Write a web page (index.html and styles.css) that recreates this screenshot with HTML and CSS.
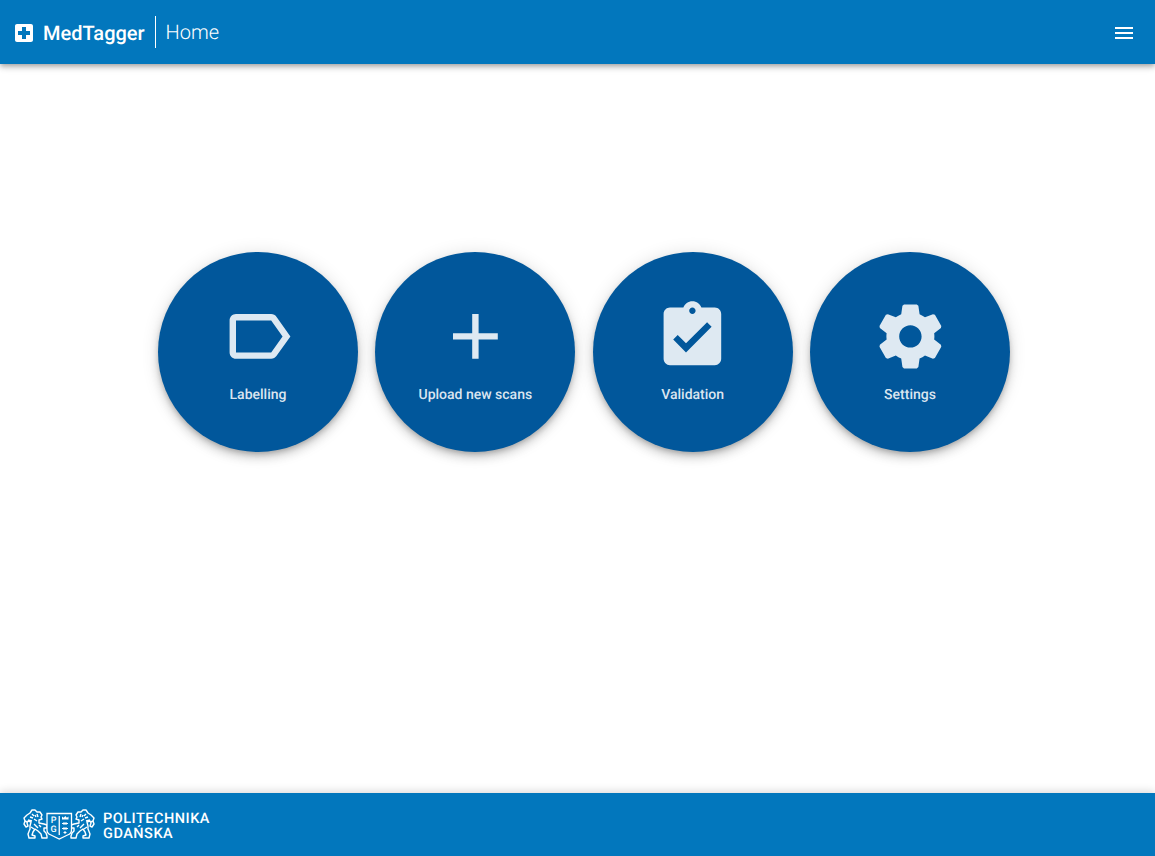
FILE: index.html
```html
<!DOCTYPE html>
<html lang="en">
<head>
  <meta charset="UTF-8">
  <meta name="viewport" content="width=device-width, initial-scale=1">
  <title>MedTagger</title>
  <link rel="stylesheet" href="styles.css">
</head>
<body>

<header class="toolbar">
  <svg class="toolbar-logo" viewBox="0 0 24 24"><path d="M19 3H5c-1.1 0-1.99.9-1.99 2L3 19c0 1.1.9 2 2 2h14c1.1 0 2-.9 2-2V5c0-1.1-.9-2-2-2zm-1 11h-4v4h-4v-4H6v-4h4V6h4v4h4v4z"/></svg>
  <span class="toolbar-brand">MedTagger</span>
  <span class="toolbar-page">Home</span>
  <svg class="toolbar-menu" viewBox="0 0 24 24"><path d="M3 18h18v-2H3v2zm0-5h18v-2H3v2zm0-7v2h18V6H3z"/></svg>
</header>

<main class="home">
  <a class="tile">
    <svg class="tile-icon" viewBox="0 0 24 24"><path d="M17.63 5.84C17.27 5.33 16.67 5 16 5L5 5.01C3.9 5.01 3 5.9 3 7v10c0 1.1.9 1.99 2 1.99L16 19c.67 0 1.27-.33 1.63-.84L22 12l-4.37-6.16zM16 17H5V7h11l3.55 5L16 17z"/></svg>
    <span class="tile-label">Labelling</span>
  </a>
  <a class="tile">
    <svg class="tile-icon" viewBox="0 0 24 24"><path d="M19 13h-6v6h-2v-6H5v-2h6V5h2v6h6v2z"/></svg>
    <span class="tile-label">Upload new scans</span>
  </a>
  <a class="tile">
    <svg class="tile-icon" viewBox="0 0 24 24"><path d="M19 3h-4.18C14.4 1.84 13.3 1 12 1c-1.3 0-2.4.84-2.82 2H5c-1.1 0-2 .9-2 2v14c0 1.1.9 2 2 2h14c1.1 0 2-.9 2-2V5c0-1.1-.9-2-2-2zm-7 0c.55 0 1 .45 1 1s-.45 1-1 1-1-.45-1-1 .45-1 1-1zm-2 14l-4-4 1.41-1.41L10 14.17l6.59-6.59L18 9l-8 8z"/></svg>
    <span class="tile-label">Validation</span>
  </a>
  <a class="tile">
    <svg class="tile-icon" viewBox="0 0 24 24"><path d="M19.43 12.98c.04-.32.07-.64.07-.98s-.03-.66-.07-.98l2.11-1.65.12-.64-2-3.46-.61-.22-2.49 1c-.52-.4-1.08-.73-1.69-.98l-.38-2.65L14 2h-4l-.49.42-.38 2.65c-.61.25-1.17.59-1.69.98l-2.49-1-.61.22-2 3.46.12.64 2.11 1.65c-.04.32-.07.65-.07.98s.03.66.07.98l-2.11 1.65-.12.64 2 3.46.61.22 2.49-1c.52.4 1.08.73 1.69.98l.38 2.65.49.42h4l.49-.42.38-2.65c.61-.25 1.17-.59 1.69-.98l2.49 1 .61-.22 2-3.46-.12-.64-2.11-1.65zM12 15.5c-1.93 0-3.5-1.57-3.5-3.5s1.57-3.500 3.500-3.500 3.500 1.570 3.500 3.500-1.570 3.500-3.500 3.500z"/></svg>
    <span class="tile-label">Settings</span>
  </a>
</main>

<footer class="footer">
  <svg class="crest" viewBox="0 0 72 32">
    <defs>
      <g id="lion" class="crest-lion">
        <path d="M12 1l2 2 3 0 2 3-1 2 1 2-3 1 0 3 5 1 3 1 0 3-3 0 0 3 2 2 1 3 0 2-5 0-1-4-3-3-3-2-2 3-1 3 3 1 0 2-6 0-1-4 2-5 0-3 1-4-3-1-1 2 1 3-2 1-2-3 1-3-1-3 3-3 3-2 2-3z"/>
        <path d="M9 5l2 2M7 8l3 1M5 11l4 1M14 5l1 3M11 10l3 2M12 6l1 2M11 15l4 4M8 18l3 2M16 16l2 2M2 12l2 1"/>
      </g>
    </defs>
    <use href="#lion"/>
    <use href="#lion" transform="matrix(-1 0 0 1 72 0)"/>
    <path class="crest-shield" d="M24 4.500h24.500v16.500c0 3-1 4-4 5l-8.250 4-8.250-4c-3-1-4-2-4-5z"/>
    <rect class="crest-bar" x="35.600" y="7" width="1.300" height="19"/>
    <text class="crest-letter" x="30.500" y="13.500">P</text>
    <text class="crest-letter" x="30.500" y="23">G</text>
    <path class="crest-bar" d="M39 10.500h6.500v-3l-1.600 1.200-1.600-1.700-1.600 1.700-1.700-1.200zM39 14h1.500v-1h1v1h1v-1h1v1h1.500v1h-1.500v1h-1v-1h-1v1h-1v-1h-1.500zM39 19h1.500v-1h1v1h1v-1h1v1h1.500v1h-1.500v1h-1v-1h-1v1h-1v-1h-1.500zM40.500 23h1v-1h1v1h1v1h-1v1h-1v-1h-1z"/>
  </svg>
  <div class="footer-name">POLITECHNIKA<br>GDAŃSKA</div>
</footer>

</body>
</html>
```

FILE: styles.css
```css
html, body {
  height: 100%;
}

body {
  margin: 0;
  display: flex;
  flex-direction: column;
  background: #ffffff;
  font-family: 'Roboto', sans-serif;
  text-rendering: geometricPrecision;
}

.toolbar {
  height: 64px;
  flex: none;
  display: flex;
  align-items: center;
  padding: 0 19px 0 12px;
  background: #0277bd;
  color: #ffffff;
  box-shadow: 0 2px 4px -1px rgba(0, 0, 0, 0.2), 0 4px 5px 0 rgba(0, 0, 0, 0.14), 0 1px 10px 0 rgba(0, 0, 0, 0.12);
  position: relative;
}

.toolbar-logo {
  width: 24px;
  height: 24px;
  fill: #ffffff;
  margin: 2px 7px 0 0;
}

.toolbar-brand {
  font-size: 20px;
  font-weight: 500;
  padding: 2px 10px 0 0;
  line-height: 30px;
  border-right: 1px solid #ffffff;
}

.toolbar-page {
  font-size: 20px;
  font-weight: 300;
  margin-left: 10px;
  line-height: 32px;
}

.toolbar-menu {
  width: 24px;
  height: 24px;
  fill: #ffffff;
  margin: 2px 0 0 auto;
}

.home {
  flex: 1;
  display: flex;
  justify-content: space-between;
  align-items: flex-start;
  padding: 188px 145px 0 158px;
}

.tile {
  width: 200px;
  height: 200px;
  border-radius: 50%;
  background: #01579b;
  color: rgba(255, 255, 255, 0.87);
  display: flex;
  flex-direction: column;
  align-items: center;
  padding-top: 46px;
  box-sizing: border-box;
  box-shadow: 0 3px 5px -1px rgba(0, 0, 0, 0.2), 0 6px 10px 0 rgba(0, 0, 0, 0.14), 0 1px 18px 0 rgba(0, 0, 0, 0.12);
}

.tile-icon {
  width: 76.8px;
  height: 76.8px;
  fill: currentColor;
}

.tile-label {
  margin-top: 10px;
  font-size: 14px;
  font-weight: 500;
  line-height: 20px;
}

.footer {
  height: 63px;
  flex: none;
  display: flex;
  align-items: center;
  gap: 8px;
  padding-left: 23px;
  background: #0277bd;
  color: #ffffff;
  box-shadow: 0 -2px 8px rgba(0, 0, 0, 0.14);
}

.crest {
  width: 72px;
  height: 32px;
}

.crest-lion {
  fill: none;
  stroke: #ffffff;
  stroke-width: 1.4;
  stroke-linejoin: round;
}

.crest-shield {
  fill: #0277bd;
  stroke: #ffffff;
  stroke-width: 1.3;
}

.crest-bar {
  fill: #ffffff;
}

.crest-letter {
  font-family: 'Roboto', sans-serif;
  font-size: 9px;
  font-weight: 500;
  fill: #ffffff;
  text-anchor: middle;
}

.footer-name {
  font-size: 14.5px;
  font-weight: 500;
  line-height: 15px;
  letter-spacing: 0.5px;
  margin-top: 2px;
}
```
